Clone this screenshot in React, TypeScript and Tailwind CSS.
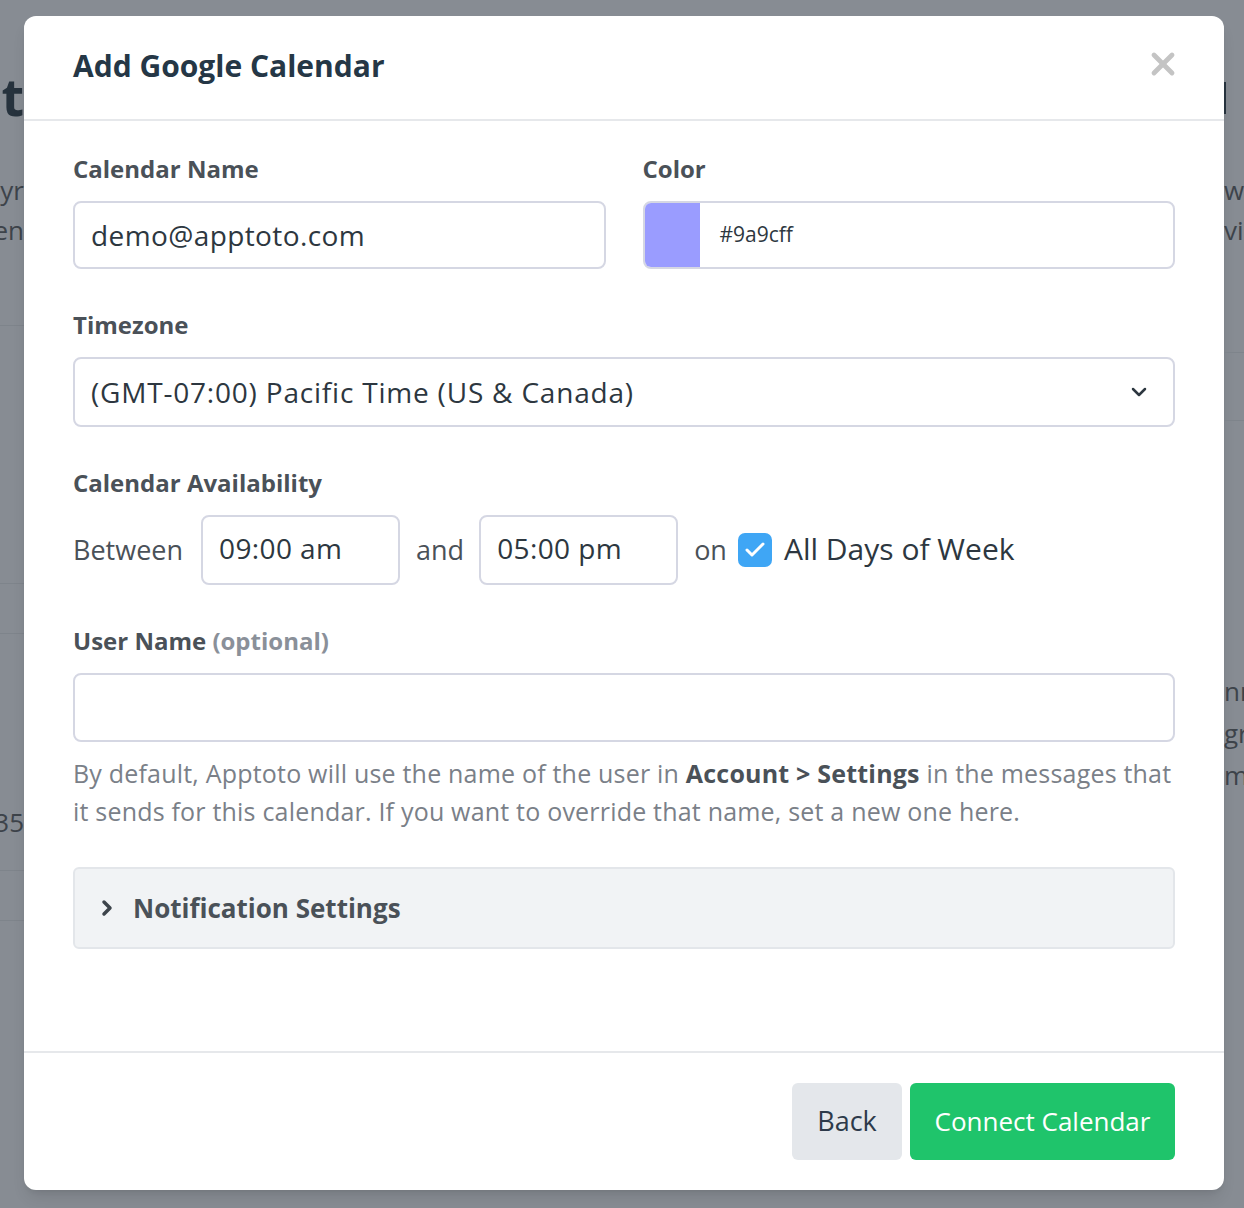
import { ChevronDown, ChevronRight, X, Check } from 'lucide-react';

const font = { fontFamily: '"Open Sans", Lato, sans-serif' };

function Gutter({ side }: { side: 'left' | 'right' }) {
  const left = side === 'left';
  return (
    <div
      className={`flex shrink-0 flex-col overflow-hidden text-[#3d434a] ${left ? 'w-[24px] items-end' : 'w-[20px] items-start'}`}
    >
      {left ? (
        <>
          <div className="h-[62px]" />
          <div className="h-[68px] text-[52px] font-bold leading-[68px] text-[#26323d]">t</div>
          <div className="h-[40px]" />
          <div className="h-[40px] text-[26px] leading-[40px]">yr</div>
          <div className="h-[40px] text-[26px] leading-[40px]">en</div>
          <div className="h-[75px]" />
          <div className="h-px w-full bg-[#7e848b]" />
          <div className="h-[257px]" />
          <div className="h-px w-full bg-[#7e848b]" />
          <div className="h-[49px]" />
          <div className="h-px w-full bg-[#7e848b]" />
          <div className="h-[168px]" />
          <div className="h-[40px] text-[26px] leading-[40px]">35</div>
          <div className="h-[28px]" />
          <div className="h-px w-full bg-[#7e848b]" />
          <div className="h-[49px]" />
          <div className="h-px w-full bg-[#7e848b]" />
        </>
      ) : (
        <>
          <div className="h-[82px]" />
          <div className="h-[32px] w-[2px] bg-[#26323d]" />
          <div className="h-[56px]" />
          <div className="h-[40px] text-[26px] leading-[40px]">w</div>
          <div className="h-[40px] text-[26px] leading-[40px]">vil</div>
          <div className="h-[102px]" />
          <div className="h-px w-full bg-[#7e848b]" />
          <div className="h-[67px]" />
          <div className="h-px w-full bg-[#7e848b]" />
          <div className="h-[249px]" />
          <div className="h-[42px] text-[26px] leading-[42px]">nn</div>
          <div className="h-[42px] text-[26px] leading-[42px]">gr</div>
          <div className="h-[42px] text-[26px] leading-[42px]">m.</div>
        </>
      )}
    </div>
  );
}

function Label({ children }: { children: React.ReactNode }) {
  return <div className="mb-4 text-[24px] font-bold leading-[32px] text-[#4a5158]">{children}</div>;
}

export default function App() {
  return (
    <div className="flex min-h-[1208px] w-[1244px] bg-[#878c93]" style={font}>
      <Gutter side="left" />
      <div className="mt-4 flex h-[1174px] w-[1200px] shrink-0 flex-col rounded-[12px] bg-white shadow-lg">
        {/* Header */}
        <div className="flex h-[105px] items-center justify-between border-b-2 border-[#e6e8eb] pb-1 pl-[49px] pr-[43px]">
          <h1 className="text-[30px] font-bold text-[#253746]">Add Google Calendar</h1>
          <X className="mb-1 h-9 w-9 text-[#c4c4c4]" strokeWidth={3.2} />
        </div>

        {/* Body */}
        <div className="flex-1 px-[49px] pt-[32px]">
          <div className="mb-10 grid grid-cols-2 gap-[37px]">
            <div>
              <Label>Calendar Name</Label>
              <div className="flex h-[68px] items-center rounded-lg border-2 border-[#d5d7e3] px-[16px] text-[28px] tracking-[0.4px] text-[#2d3740]">
                demo@apptoto.com
              </div>
            </div>
            <div>
              <Label>Color</Label>
              <div className="flex h-[68px] overflow-hidden rounded-lg border-2 border-[#d5d7e3]">
                <div className="w-[55px] bg-[#9a9cff]" />
                <div className="flex items-center pl-[20px] text-[21px] text-[#2d3740]">#9a9cff</div>
              </div>
            </div>
          </div>

          <div className="mb-10">
            <Label>Timezone</Label>
            <div className="flex h-[70px] items-center justify-between rounded-lg border-2 border-[#d5d7e3] pl-[16px] pr-[22px] text-[28px] tracking-[0.8px] text-[#2d3740]">
              <span>(GMT-07:00) Pacific Time (US &amp; Canada)</span>
              <ChevronDown className="h-6 w-6 text-[#2d3740]" strokeWidth={2.5} />
            </div>
          </div>

          <div className="mb-10">
            <Label>Calendar Availability</Label>
            <div className="flex items-center text-[27px] text-[#4a5158]">
              <span className="mr-[18px]">Between</span>
              <div className="flex h-[70px] w-[199px] items-center rounded-lg border-2 border-[#d5d7e3] px-[16px] pb-1 text-[28px] tracking-[0.4px] text-[#2d3740]">
                09:00 am
              </div>
              <span className="ml-[16px] mr-[15px]">and</span>
              <div className="flex h-[70px] w-[199px] items-center rounded-lg border-2 border-[#d5d7e3] px-[16px] pb-1 text-[28px] tracking-[0.4px] text-[#2d3740]">
                05:00 pm
              </div>
              <span className="ml-[16px] mr-[11px]">on</span>
              <div className="flex h-[34px] w-[34px] items-center justify-center rounded-[7px] bg-[#3fa6f5]">
                <Check className="h-6 w-6 text-white" strokeWidth={3} />
              </div>
              <span className="mb-1 ml-[12px] text-[30px] text-[#2d3740]">All Days of Week</span>
            </div>
          </div>

          <div className="mb-[37px]">
            <Label>
              User Name <span className="text-[#8a9099]">(optional)</span>
            </Label>
            <div className="h-[69px] rounded-lg border-2 border-[#d5d7e3]" />
            <p className="mt-[12px] text-[25px] leading-[38px] tracking-[0.2px] text-[#7a8088]">
              By default, Apptoto will use the name of the user in{' '}
              <b className="text-[#4a5158]">Account &gt; Settings</b> in the messages that it sends for this
              calendar. If you want to override that name, set a new one here.
            </p>
          </div>

          <div className="flex h-[82px] items-center rounded-md border-2 border-[#e3e6ea] bg-[#f1f3f5] pl-[20px] text-[26px] font-bold text-[#4a5158]">
            <ChevronRight className="mr-[14px] h-6 w-6 text-[#3d444b]" strokeWidth={3.5} />
            Notification Settings
          </div>
        </div>

        {/* Footer */}
        <div className="flex h-[139px] items-center justify-end gap-2 border-t-2 border-[#e6e8eb] px-[49px]">
          <button className="h-[77px] w-[110px] rounded-md bg-[#e4e7eb] text-[27px] text-[#2d3a4a]">Back</button>
          <button className="h-[77px] w-[265px] rounded-md bg-[#1fc46b] text-[26px] text-white">Connect Calendar</button>
        </div>
      </div>
      <Gutter side="right" />
    </div>
  );
}
